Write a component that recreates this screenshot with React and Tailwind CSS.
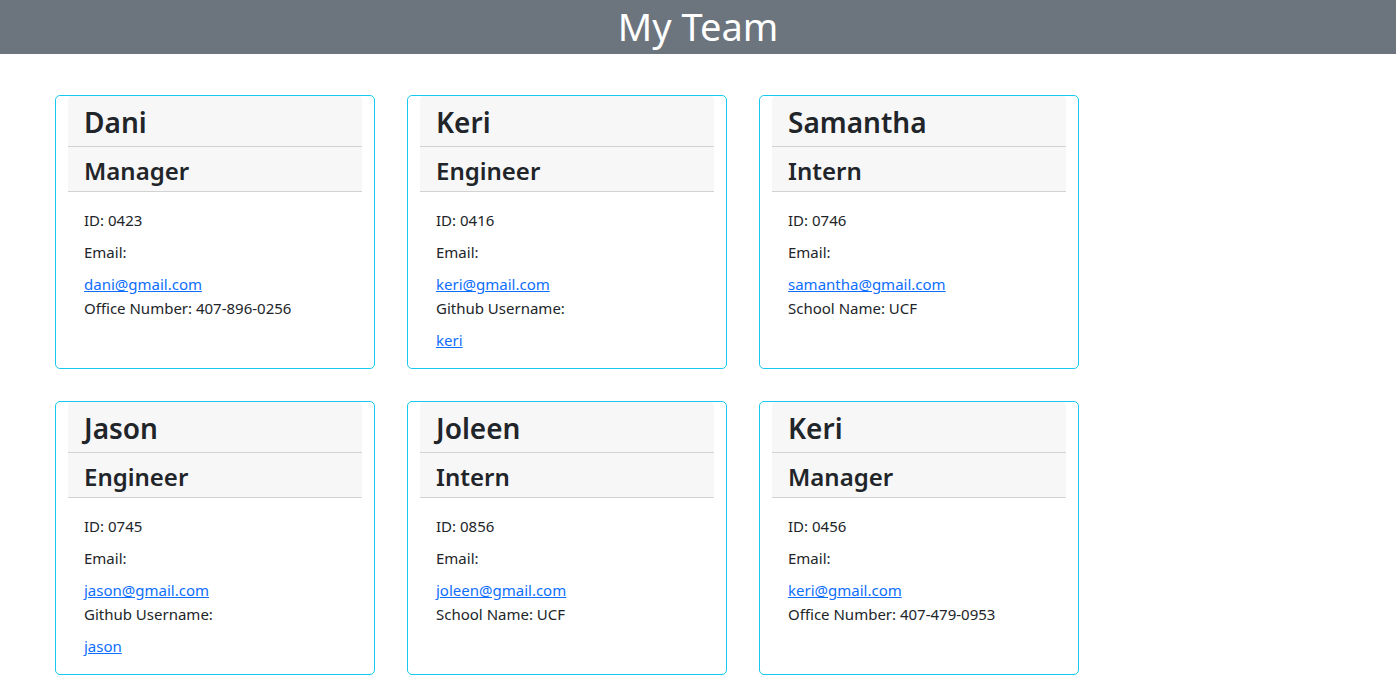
import React from "react";

const team = [
  [
    { name: "Dani", role: "Manager", id: "0423", email: "dani@gmail.com", extra: { label: "Office Number: 407-896-0256" } },
    { name: "Keri", role: "Engineer", id: "0416", email: "keri@gmail.com", extra: { label: "Github Username:", link: "keri" } },
    { name: "Samantha", role: "Intern", id: "0746", email: "samantha@gmail.com", extra: { label: "School Name: UCF" } },
  ],
  [
    { name: "Jason", role: "Engineer", id: "0745", email: "jason@gmail.com", extra: { label: "Github Username:", link: "jason" } },
    { name: "Joleen", role: "Intern", id: "0856", email: "joleen@gmail.com", extra: { label: "School Name: UCF" } },
    { name: "Keri", role: "Manager", id: "0456", email: "keri@gmail.com", extra: { label: "Office Number: 407-479-0953" } },
  ],
];

function Card({ m }) {
  return (
    <div className="w-[320px] border border-[#17c9ee] rounded-[5px] px-3 flex flex-col">
      <div className="bg-[#f7f7f7] rounded-t-[4px] border-b border-[#d2d2d2] px-4 pt-[9px] pb-[7px]">
        <h2 className="text-[28px] leading-[34px] font-semibold text-[#212529]">{m.name}</h2>
      </div>
      <div className="bg-[#f7f7f7] border-b border-[#d2d2d2] px-4 pt-[10px] pb-[6px]">
        <h3 className="text-[24px] leading-[28px] font-semibold text-[#212529]">{m.role}</h3>
      </div>
      <div className="px-4 pt-4 pb-4 text-[15px] leading-[24px] text-[#212529]">
        <p className="mb-2">ID: {m.id}</p>
        <p className="mb-2">Email:</p>
        <a href="#" className="block text-[#0d6efd] underline">{m.email}</a>
        <p className="mb-2">{m.extra.label}</p>
        {m.extra.link && (
          <a href="#" className="block text-[#0d6efd] underline">{m.extra.link}</a>
        )}
      </div>
    </div>
  );
}

export default function App() {
  return (
    <div className="min-h-screen bg-white" style={{ fontFamily: '"Noto Sans", "Open Sans", sans-serif' }}>
      <header className="h-[54px] bg-[#6c757d] flex items-center justify-center">
        <h1 className="text-[38px] leading-none text-white font-normal -mt-[2px]">My Team</h1>
      </header>
      <main className="pl-[55px] pt-[41px] flex flex-col gap-8">
        {team.map((row, i) => (
          <div key={i} className="flex gap-8">
            {row.map((m, j) => (
              <Card key={j} m={m} />
            ))}
          </div>
        ))}
      </main>
    </div>
  );
}
